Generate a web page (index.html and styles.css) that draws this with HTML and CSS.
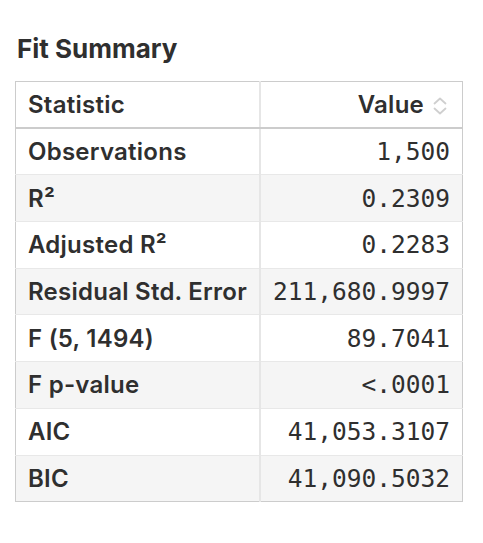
FILE: index.html
```html
<!DOCTYPE html>
<html>
<head>
<meta charset="utf-8">
<link rel="stylesheet" href="styles.css">
</head>
<body>
<div class="wrap">
  <h2 class="title">Fit Summary</h2>
  <table class="fit">
    <thead>
      <tr>
        <th class="stat">Statistic</th>
        <th class="val">Value<svg class="sort" width="14" height="20" viewBox="0 0 14 20"><path d="M1.5 7.5 L7 2.5 L12.5 7.5" fill="none" stroke="#cfcfcf" stroke-width="1.8" stroke-linecap="round" stroke-linejoin="round"/><path d="M1.5 12.5 L7 17.5 L12.5 12.5" fill="none" stroke="#cfcfcf" stroke-width="1.8" stroke-linecap="round" stroke-linejoin="round"/></svg></th>
      </tr>
    </thead>
    <tbody>
      <tr><td class="stat">Observations</td><td class="val">1,500</td></tr>
      <tr><td class="stat">R²</td><td class="val">0.2309</td></tr>
      <tr><td class="stat">Adjusted R²</td><td class="val">0.2283</td></tr>
      <tr><td class="stat">Residual Std. Error</td><td class="val">211,680.9997</td></tr>
      <tr><td class="stat">F (5, 1494)</td><td class="val">89.7041</td></tr>
      <tr><td class="stat">F p-value</td><td class="val">&lt;.0001</td></tr>
      <tr><td class="stat">AIC</td><td class="val">41,053.3107</td></tr>
      <tr><td class="stat">BIC</td><td class="val">41,090.5032</td></tr>
    </tbody>
  </table>
</div>
</body>
</html>
```
FILE: styles.css
```css
html, body {
  margin: 0;
  padding: 0;
  background: #ffffff;
}
.wrap {
  padding: 34px 0 0 15px;
  font-family: Inter, "Noto Sans", sans-serif;
  color: #2f2f2f;
}
.title {
  margin: 0 0 17px 2px;
  font-size: 26px;
  font-weight: 700;
  line-height: 30px;
  color: #2f2f2f;
}
.fit {
  border-collapse: collapse;
  width: 448px;
  border: 1px solid #cccccc;
}
.fit th, .fit td {
  height: 46.7px;
  padding: 0 12px;
  box-sizing: border-box;
  border-bottom: 1px solid #e8e8e8;
  font-size: 24px;
}
.fit th {
  text-align: left;
  font-weight: 600;
  border-bottom: 2px solid #cccccc;
}
.fit .stat {
  width: 243px;
  font-weight: 600;
  letter-spacing: 0.25px;
  border-right: 2px solid #e6e6e6;
  white-space: nowrap;
}
.fit th.val {
  text-align: right;
  white-space: nowrap;
  padding-right: 15px;
  letter-spacing: 0.25px;
}
.fit td.val {
  text-align: right;
  font-family: "DejaVu Sans Mono", "Liberation Mono", monospace;
  font-size: 24.5px;
}
.fit tbody tr:nth-child(even) td {
  background: #f5f5f5;
}
.fit tbody tr:last-child td {
  border-bottom: none;
}
.sort {
  vertical-align: -3px;
  margin-left: 9px;
}
```
